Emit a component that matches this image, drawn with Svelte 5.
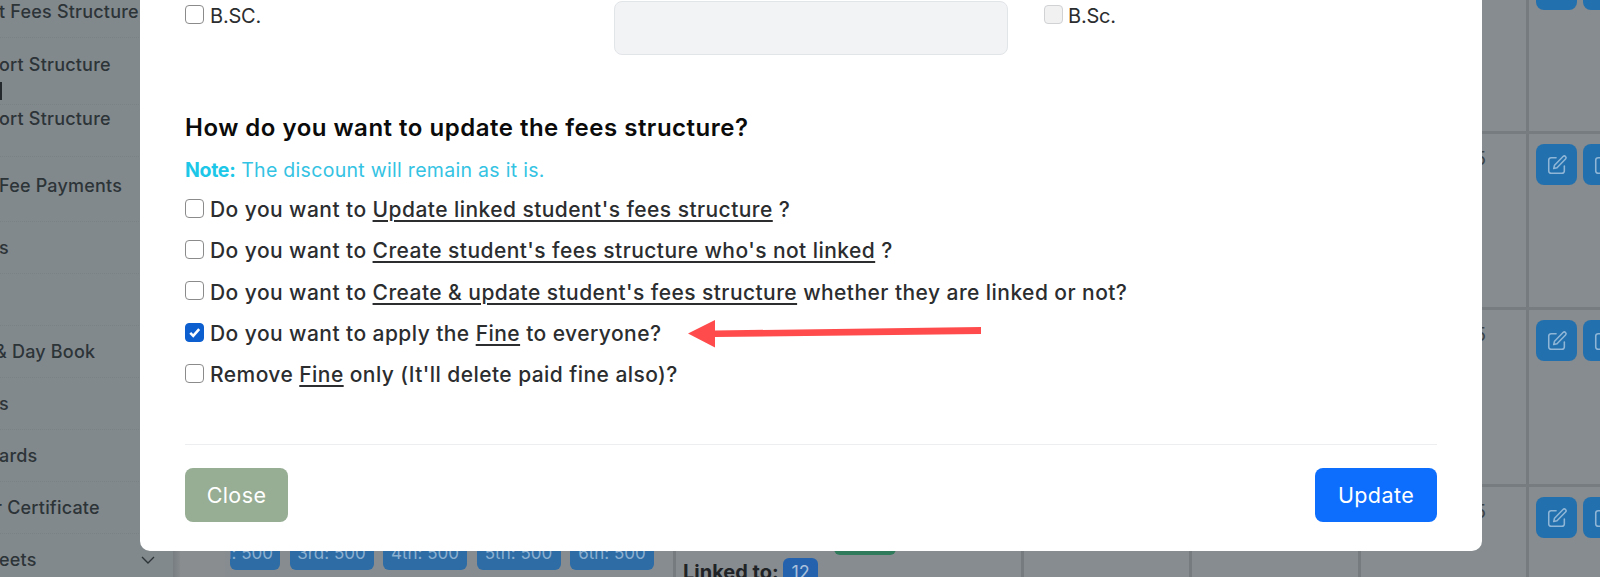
<script>
    const menu = [
        { label: 't Fees Structure', cls: 'first' },
        { label: 'ort Structure', cls: 'double' },
        { label: 'ort Structure', cls: 'tight' },
        { label: 'Fee Payments', cls: 'tall' },
        { label: 's' },
        { label: '' },
        { label: '& Day Book', cls: 'cut' },
        { label: 's' },
        { label: 'ards' },
        { label: 'r Certificate', cls: 'cut' },
        { label: 'eets', arrow: true }
    ];

    const options = [
        { before: 'Do you want to ', link: "Update linked student's fees structure", after: ' ?' },
        { before: 'Do you want to ', link: "Create student's fees structure who's not linked", after: ' ?' },
        { before: 'Do you want to ', link: "Create & update student's fees structure", after: ' whether they are linked or not?' },
        { before: 'Do you want to apply the ', link: 'Fine', after: ' to everyone?', checked: true },
        { before: 'Remove ', link: 'Fine', after: " only (It'll delete paid fine also)?" }
    ];

    const rows = ['top', 'second', 'third', 'last'];
    const fees = ['2nd: 500', '3rd: 500', '4th: 500', '5th: 500', '6th: 500'];
</script>

<div class="page">
    <aside class="sidebar">
        {#each menu as item}
            <div class="menu-item {item.cls ?? ''}">
                <span>{item.label}</span>
                {#if item.cls === 'double'}<i class="pipe"></i>{/if}
                {#if item.arrow}
                    <svg class="chevron" viewBox="0 0 14 8" aria-hidden="true">
                        <path d="M1 1l6 6 6-6" fill="none" stroke="currentColor" stroke-width="1.4" />
                    </svg>
                {/if}
            </div>
        {/each}
    </aside>

    <main class="table">
        {#each rows as row}
            <div class="row {row}">
                <div class="cell strip"></div>
                <div class="cell fees">
                    {#if row === 'last'}
                        {#each fees as fee}
                            <span class="pill">{fee}</span>
                        {/each}
                    {/if}
                </div>
                <div class="cell linked">
                    {#if row === 'last'}
                        <span class="green"></span>
                        <div class="linked-to">Linked to: <b>12</b></div>
                    {/if}
                </div>
                <div class="cell"></div>
                <div class="cell"></div>
                <div class="cell amount">{row === 'top' ? '' : '5'}</div>
                <div class="cell actions">
                    {#each [0, 1] as n}
                        <span class="action">
                            <svg viewBox="0 0 24 24" aria-hidden="true">
                                <path d="M11 4H5.5A2.5 2.5 0 0 0 3 6.5v12A2.5 2.5 0 0 0 5.5 21h12a2.5 2.5 0 0 0 2.5-2.5V13" fill="none" stroke="currentColor" stroke-width="1.7" stroke-linecap="round" />
                                <path d="M18.6 2.8a1.9 1.9 0 0 1 2.7 2.7L12 15l-3.6.9.9-3.6z" fill="none" stroke="currentColor" stroke-width="1.7" stroke-linejoin="round" />
                            </svg>
                        </span>
                    {/each}
                </div>
            </div>
        {/each}
    </main>

    <div class="modal">
        <div class="classes">
            <label class="check"><input type="checkbox" /> B.SC.</label>
            <div class="readonly"></div>
            <label class="check off"><input type="checkbox" disabled /> B.Sc.</label>
        </div>

        <h2>How do you want to update the fees structure?</h2>
        <p class="note"><b>Note:</b> The discount will remain as it is.</p>

        <div class="options">
            {#each options as opt}
                <label class="check">
                    <input type="checkbox" checked={opt.checked} />
                    <span>{opt.before}<u>{opt.link}</u>{opt.after}</span>
                </label>
            {/each}
        </div>

        <footer>
            <button class="close">Close</button>
            <button class="update">Update</button>
        </footer>
    </div>

    <svg class="arrow" viewBox="0 0 293 29" aria-hidden="true">
        <path d="M0 14.5 27 1v10.5l266-3.5v7L27 18v10.5z" fill="#ff4b4b" />
    </svg>
</div>

<style>
    :global(body) {
        margin: 0;
        background: #868c8f;
    }

    .page {
        position: relative;
        display: flex;
        height: 577px;
        overflow: hidden;
        font-family: Inter, "Open Sans", sans-serif;
        color: #2b2d2f;
        background: #868c8f;
    }

    .sidebar {
        flex: 0 0 173px;
        margin-top: -14px;
        background: #82898d;
        color: #2d3438;
        font-size: 18px;
        font-weight: 500;
        letter-spacing: 0.2px;
        line-height: 27px;
        overflow: hidden;
    }

    .menu-item {
        position: relative;
        box-sizing: border-box;
        height: 52px;
        padding-top: 12px;
        margin-left: -1px;
        border-bottom: 1px dotted #7a8286;
        white-space: nowrap;
    }
    .menu-item.double { height: 67px; padding-top: 13px; }
    .menu-item.tight { padding-top: 0; }
    .menu-item.tall { height: 65px; padding-top: 15px; }
    .menu-item.cut { text-indent: -4px; }

    .pipe {
        display: block;
        width: 3px;
        height: 18px;
        margin-top: 4px;
        background: #23292c;
    }

    .chevron {
        position: absolute;
        left: 142px;
        top: 22px;
        width: 14px;
        height: 8px;
        color: #2d3438;
    }

    .table {
        flex: 1;
        min-width: 0;
        padding-left: 7px;
        background: linear-gradient(90deg, #777d81, #868a8d 7px, transparent 7px);
    }

    .row {
        display: grid;
        grid-template-columns: 45px 451px 348px 168px 169px 168px 90px;
        box-sizing: border-box;
        border-bottom: 3px solid #767c7f;
    }
    .row.top { height: 134px; }
    .row.second { height: 176px; }
    .row.third { height: 177px; }
    .row.last { height: 90px; border-bottom: 0; }

    .cell {
        box-sizing: border-box;
        min-width: 0;
        border-right: 3px solid #757b7e;
    }

    .strip {
        border-right: 0;
        background: #8a8d90;
    }

    .fees {
        display: flex;
        gap: 9.5px;
        padding: 53px 0 0 5px;
    }

    .pill {
        flex: 0 0 84px;
        height: 30px;
        border-radius: 0 0 6px 6px;
        background: #2e6ca5;
        color: #8cb0d0;
        font-size: 17px;
        line-height: 26px;
        text-align: center;
        white-space: nowrap;
        overflow: hidden;
    }
    .pill:first-child {
        flex-basis: 50px;
        display: flex;
        justify-content: flex-end;
        box-sizing: border-box;
        padding-right: 7px;
    }

    .linked {
        padding: 42px 0 0 7px;
    }

    .green {
        display: block;
        width: 62px;
        height: 26px;
        margin-left: 151px;
        border-radius: 6px;
        background: #2e7a5a;
    }

    .linked-to {
        margin-top: 3px;
        font-size: 20px;
        font-weight: 700;
        line-height: 26px;
        color: #1f2326;
    }

    .linked-to b {
        display: inline-block;
        padding: 2px 8px;
        border-radius: 6px;
        background: #2462ad;
        color: #a9c0dc;
        font-size: 18px;
        font-weight: 400;
    }

    .amount {
        padding: 13px 40px 0 0;
        text-align: right;
        font-size: 19px;
        line-height: 24px;
        color: #3e4346;
    }

    .actions {
        display: flex;
        gap: 6px;
        padding: 10px 0 0 7px;
        border-right: 0;
    }
    .top .actions { margin-top: -41px; }

    .action {
        flex: 0 0 41px;
        display: flex;
        align-items: center;
        justify-content: center;
        height: 41px;
        border-radius: 8px;
        background: #2370ae;
        color: #8fb6d6;
    }
    .action svg {
        width: 22px;
        height: 22px;
    }

    /* dialog sits over the dimmed page */
    .modal {
        position: absolute;
        top: 0;
        left: 140px;
        box-sizing: border-box;
        width: 1342px;
        height: 551px;
        padding: 1px 45px 0;
        border-radius: 0 0 10px 10px;
        background: #fff;
    }

    .classes {
        display: grid;
        grid-template-columns: 429px 394px 1fr;
        height: 54px;
    }

    .readonly {
        box-sizing: border-box;
        height: 54px;
        border: 1px solid #e2e5e8;
        border-radius: 8px;
        background: #f1f3f5;
    }

    .check {
        display: flex;
        align-items: center;
        gap: 6px;
        height: 41.3px;
        font-size: 21px;
        font-weight: 500;
        letter-spacing: 0.44px;
        white-space: nowrap;
    }

    .classes .check {
        height: 30px;
        font-size: 20px;
        font-weight: 400;
        letter-spacing: -0.2px;
    }
    .classes .off {
        padding-left: 36px;
        gap: 5px;
    }

    input[type="checkbox"] {
        appearance: none;
        flex: none;
        box-sizing: border-box;
        width: 19px;
        height: 19px;
        margin: -3px 0 0;
        border: 1.5px solid #8b8b8b;
        border-radius: 4px;
        background: #fff center / 100% no-repeat;
    }
    input[type="checkbox"]:checked {
        border-color: #0d5fd0;
        background-color: #0d5fd0;
        background-image: url("data:image/svg+xml,%3Csvg xmlns='http://www.w3.org/2000/svg' viewBox='0 0 20 20'%3E%3Cpath fill='none' stroke='%23fff' stroke-width='3' d='M5 10.5l3.5 3.5 7-8'/%3E%3C/svg%3E");
    }
    input[type="checkbox"]:disabled {
        border-color: #d0d2d4;
        background-color: #f1f1f1;
    }

    h2 {
        margin: 58px 0 0;
        font-size: 24px;
        font-weight: 600;
        letter-spacing: 0.5px;
        line-height: 30px;
        color: #0b0b0b;
    }

    .note {
        margin: 12px 0 4px;
        font-size: 19.5px;
        letter-spacing: 0.3px;
        line-height: 30px;
        color: #35c3e3;
    }
    .note b {
        color: #1cc7e8;
        font-weight: 700;
        letter-spacing: -0.3px;
    }

    u {
        text-underline-offset: 3px;
    }

    footer {
        display: flex;
        justify-content: space-between;
        margin-top: 49px;
        padding-top: 23px;
        border-top: 1px solid #eceeef;
    }

    button {
        height: 54px;
        border: 0;
        border-radius: 8px;
        color: #fff;
        font: 400 21.5px Inter, sans-serif;
        letter-spacing: 0.4px;
    }
    .close {
        width: 103px;
        background: #97ad94;
    }
    .update {
        width: 122px;
        background: #0d6efd;
    }

    .arrow {
        position: absolute;
        left: 688px;
        top: 319px;
        width: 293px;
        height: 29px;
    }
</style>
